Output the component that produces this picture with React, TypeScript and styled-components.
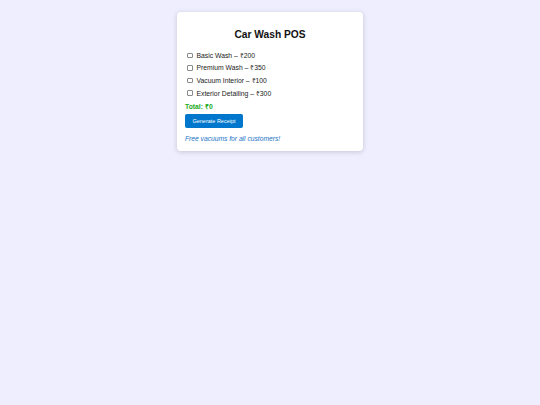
import React, { useState } from 'react';
import styled, { createGlobalStyle } from 'styled-components';

const GlobalStyle = createGlobalStyle`
    html, body {
        margin: 0;
        padding: 0;
        background: #eeeeff;
        font-family: "Liberation Sans", Arial, sans-serif;
    }
`;

const services = [
    {name: 'Basic Wash', price: 200},
    {name: 'Premium Wash', price: 350},
    {name: 'Vacuum Interior', price: 100},
    {name: 'Exterior Detailing', price: 300},
];

export default function App() {
    const [picked, setPicked] = useState<number[]>([]);
    const total = picked.reduce((sum, i) => sum + services[i].price, 0);

    const toggle = (i: number) =>
        setPicked((p) => (p.includes(i) ? p.filter((x) => x !== i) : [...p, i]));

    return (
        <>
            <GlobalStyle/>
            <Page>
                <Card>
                    <Title>Car Wash POS</Title>
                    <ServiceList>
                        {services.map((s, i) => (
                            <ServiceRow key={s.name}>
                                <Check type="checkbox" checked={picked.includes(i)} onChange={() => toggle(i)}/>
                                {s.name} – ₹{s.price}
                            </ServiceRow>
                        ))}
                    </ServiceList>
                    <Total>Total: ₹{total}</Total>
                    <ReceiptButton>Generate Receipt</ReceiptButton>
                    <Promo>Free vacuums for all customers!</Promo>
                </Card>
            </Page>
        </>
    );
}

const Page = styled.div`
    min-height: 405px;
    display: flex;
    justify-content: center;
    align-items: flex-start;
    padding-top: 12px;
    box-sizing: border-box;
`;

const Card = styled.div`
    width: 186px;
    box-sizing: border-box;
    background: #ffffff;
    border-radius: 4px;
    box-shadow: 0 1px 5px rgba(0, 0, 0, 0.18);
    padding: 17px 8px 8px;
    display: flex;
    flex-direction: column;
    align-items: flex-start;
`;

const Title = styled.h2`
    align-self: stretch;
    margin: 0 0 7px;
    text-align: center;
    font-size: 10.2px;
    line-height: 12px;
    font-weight: 700;
    color: #111111;
`;

const ServiceList = styled.div`
    display: flex;
    flex-direction: column;
    margin-top: 1px;
`;

const ServiceRow = styled.label`
    display: flex;
    align-items: center;
    height: 12.6px;
    font-size: 6.8px;
    color: #1a1a1a;
`;

const Check = styled.input`
    appearance: none;
    width: 5.5px;
    height: 5.5px;
    box-sizing: border-box;
    margin: 0 4px 0 2px;
    border: 0.7px solid #8a8a8a;
    border-radius: 1px;
    background: #ffffff;

    &:checked {
        background: #0077cc;
        border-color: #0077cc;
    }
`;

const Total = styled.div`
    margin-top: 4px;
    font-size: 6.8px;
    line-height: 8px;
    font-weight: 700;
    color: #22aa22;
`;

const ReceiptButton = styled.button`
    margin-top: 3px;
    width: 58px;
    height: 14px;
    padding: 0;
    border: none;
    border-radius: 2px;
    background: #0077cc;
    color: #ffffff;
    font-family: "Liberation Sans", Arial, sans-serif;
    font-size: 5.5px;
`;

const Promo = styled.p`
    margin: 7px 0 0;
    font-size: 6.7px;
    line-height: 8px;
    font-style: italic;
    color: #1a73c8;
`;
